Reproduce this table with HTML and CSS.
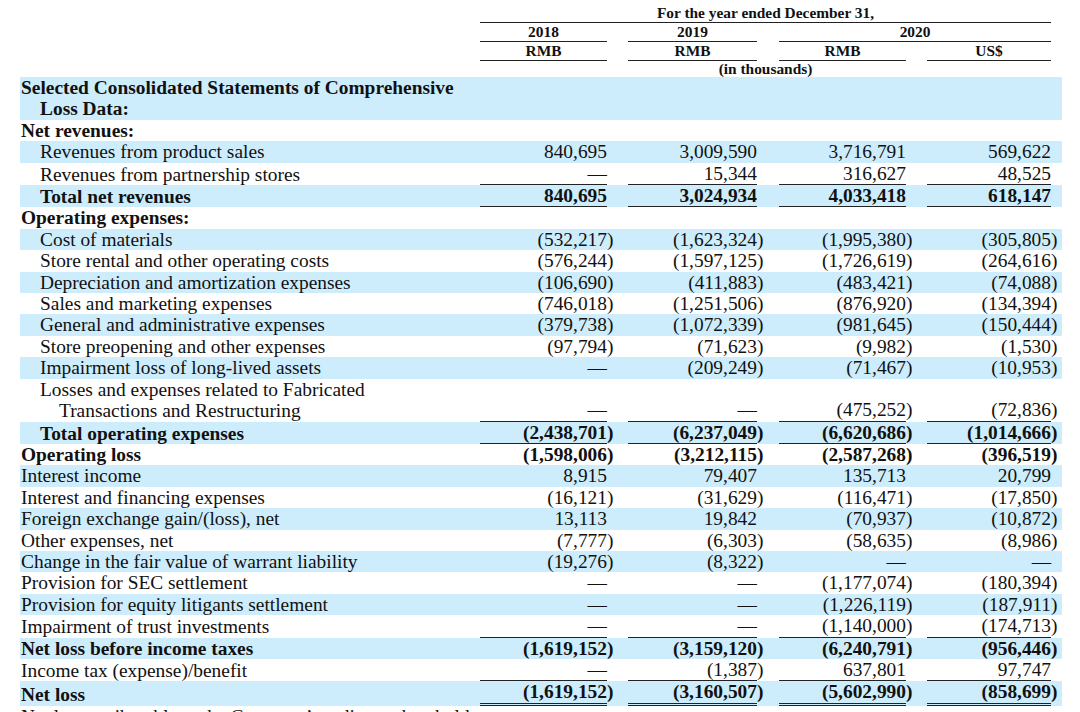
FILE: index.html
```html
<!DOCTYPE html>
<html lang="en">
<head>
<meta charset="utf-8">
<title>Selected Consolidated Statements of Comprehensive Loss Data</title>
<link rel="stylesheet" href="styles.css">
</head>
<body>
<table class="fin">
  <colgroup>
    <col class="c-lbl"><col class="c-v1"><col class="c-g1"><col class="c-v2"><col class="c-g2"><col class="c-v3"><col class="c-g3"><col class="c-v4"><col class="c-tr">
  </colgroup>
  <thead>
    <tr class="hd">
      <td></td><td colspan="7" class="rule">For the year ended December 31,</td><td></td>
    </tr>
    <tr class="hd">
      <td></td><td class="rule">2018</td><td></td><td class="rule">2019</td><td></td><td colspan="3" class="rule">2020</td><td></td>
    </tr>
    <tr class="hd">
      <td></td><td class="rule">RMB</td><td></td><td class="rule">RMB</td><td></td><td class="rule">RMB</td><td></td><td class="rule">US$</td><td></td>
    </tr>
    <tr class="hd hd-last">
      <td></td><td colspan="7">(in thousands)</td><td></td>
    </tr>
  </thead>
  <tbody>
    <tr class="r b bold"><td class="lbl l0">Selected Consolidated Statements of Comprehensive<span class="cont">Loss Data:</span></td><td class="v"></td><td></td><td class="v"></td><td></td><td class="v"></td><td></td><td class="v"></td><td></td></tr>
    <tr class="r bold"><td class="lbl l0">Net revenues:</td><td class="v"></td><td></td><td class="v"></td><td></td><td class="v"></td><td></td><td class="v"></td><td></td></tr>
    <tr class="r b"><td class="lbl l1">Revenues from product sales</td><td class="v">840,695</td><td></td><td class="v">3,009,590</td><td></td><td class="v">3,716,791</td><td></td><td class="v">569,622</td><td></td></tr>
    <tr class="r u"><td class="lbl l1">Revenues from partnership stores</td><td class="v">—</td><td></td><td class="v">15,344</td><td></td><td class="v">316,627</td><td></td><td class="v">48,525</td><td></td></tr>
    <tr class="r b bold u"><td class="lbl l1">Total net revenues</td><td class="v">840,695</td><td></td><td class="v">3,024,934</td><td></td><td class="v">4,033,418</td><td></td><td class="v">618,147</td><td></td></tr>
    <tr class="r bold"><td class="lbl l0">Operating expenses:</td><td class="v"></td><td></td><td class="v"></td><td></td><td class="v"></td><td></td><td class="v"></td><td></td></tr>
    <tr class="r b"><td class="lbl l1">Cost of materials</td><td class="v">(532,217<span class="p">)</span></td><td></td><td class="v">(1,623,324<span class="p">)</span></td><td></td><td class="v">(1,995,380<span class="p">)</span></td><td></td><td class="v">(305,805<span class="p">)</span></td><td></td></tr>
    <tr class="r"><td class="lbl l1">Store rental and other operating costs</td><td class="v">(576,244<span class="p">)</span></td><td></td><td class="v">(1,597,125<span class="p">)</span></td><td></td><td class="v">(1,726,619<span class="p">)</span></td><td></td><td class="v">(264,616<span class="p">)</span></td><td></td></tr>
    <tr class="r b"><td class="lbl l1">Depreciation and amortization expenses</td><td class="v">(106,690<span class="p">)</span></td><td></td><td class="v">(411,883<span class="p">)</span></td><td></td><td class="v">(483,421<span class="p">)</span></td><td></td><td class="v">(74,088<span class="p">)</span></td><td></td></tr>
    <tr class="r"><td class="lbl l1">Sales and marketing expenses</td><td class="v">(746,018<span class="p">)</span></td><td></td><td class="v">(1,251,506<span class="p">)</span></td><td></td><td class="v">(876,920<span class="p">)</span></td><td></td><td class="v">(134,394<span class="p">)</span></td><td></td></tr>
    <tr class="r b"><td class="lbl l1">General and administrative expenses</td><td class="v">(379,738<span class="p">)</span></td><td></td><td class="v">(1,072,339<span class="p">)</span></td><td></td><td class="v">(981,645<span class="p">)</span></td><td></td><td class="v">(150,444<span class="p">)</span></td><td></td></tr>
    <tr class="r"><td class="lbl l1">Store preopening and other expenses</td><td class="v">(97,794<span class="p">)</span></td><td></td><td class="v">(71,623<span class="p">)</span></td><td></td><td class="v">(9,982<span class="p">)</span></td><td></td><td class="v">(1,530<span class="p">)</span></td><td></td></tr>
    <tr class="r b"><td class="lbl l1">Impairment loss of long-lived assets</td><td class="v">—</td><td></td><td class="v">(209,249<span class="p">)</span></td><td></td><td class="v">(71,467<span class="p">)</span></td><td></td><td class="v">(10,953<span class="p">)</span></td><td></td></tr>
    <tr class="r u"><td class="lbl l1">Losses and expenses related to Fabricated<span class="cont">Transactions and Restructuring</span></td><td class="v">—</td><td></td><td class="v">—</td><td></td><td class="v">(475,252<span class="p">)</span></td><td></td><td class="v">(72,836<span class="p">)</span></td><td></td></tr>
    <tr class="r b bold u"><td class="lbl l1">Total operating expenses</td><td class="v">(2,438,701<span class="p">)</span></td><td></td><td class="v">(6,237,049<span class="p">)</span></td><td></td><td class="v">(6,620,686<span class="p">)</span></td><td></td><td class="v">(1,014,666<span class="p">)</span></td><td></td></tr>
    <tr class="r bold"><td class="lbl l0">Operating loss</td><td class="v">(1,598,006<span class="p">)</span></td><td></td><td class="v">(3,212,115<span class="p">)</span></td><td></td><td class="v">(2,587,268<span class="p">)</span></td><td></td><td class="v">(396,519<span class="p">)</span></td><td></td></tr>
    <tr class="r b"><td class="lbl l0">Interest income</td><td class="v">8,915</td><td></td><td class="v">79,407</td><td></td><td class="v">135,713</td><td></td><td class="v">20,799</td><td></td></tr>
    <tr class="r"><td class="lbl l0">Interest and financing expenses</td><td class="v">(16,121<span class="p">)</span></td><td></td><td class="v">(31,629<span class="p">)</span></td><td></td><td class="v">(116,471<span class="p">)</span></td><td></td><td class="v">(17,850<span class="p">)</span></td><td></td></tr>
    <tr class="r b"><td class="lbl l0">Foreign exchange gain/(loss), net</td><td class="v">13,113</td><td></td><td class="v">19,842</td><td></td><td class="v">(70,937<span class="p">)</span></td><td></td><td class="v">(10,872<span class="p">)</span></td><td></td></tr>
    <tr class="r"><td class="lbl l0">Other expenses, net</td><td class="v">(7,777<span class="p">)</span></td><td></td><td class="v">(6,303<span class="p">)</span></td><td></td><td class="v">(58,635<span class="p">)</span></td><td></td><td class="v">(8,986<span class="p">)</span></td><td></td></tr>
    <tr class="r b"><td class="lbl l0">Change in the fair value of warrant liability</td><td class="v">(19,276<span class="p">)</span></td><td></td><td class="v">(8,322<span class="p">)</span></td><td></td><td class="v">—</td><td></td><td class="v">—</td><td></td></tr>
    <tr class="r"><td class="lbl l0">Provision for SEC settlement</td><td class="v">—</td><td></td><td class="v">—</td><td></td><td class="v">(1,177,074<span class="p">)</span></td><td></td><td class="v">(180,394<span class="p">)</span></td><td></td></tr>
    <tr class="r b"><td class="lbl l0">Provision for equity litigants settlement</td><td class="v">—</td><td></td><td class="v">—</td><td></td><td class="v">(1,226,119<span class="p">)</span></td><td></td><td class="v">(187,911<span class="p">)</span></td><td></td></tr>
    <tr class="r u"><td class="lbl l0">Impairment of trust investments</td><td class="v">—</td><td></td><td class="v">—</td><td></td><td class="v">(1,140,000<span class="p">)</span></td><td></td><td class="v">(174,713<span class="p">)</span></td><td></td></tr>
    <tr class="r b bold"><td class="lbl l0">Net loss before income taxes</td><td class="v">(1,619,152<span class="p">)</span></td><td></td><td class="v">(3,159,120<span class="p">)</span></td><td></td><td class="v">(6,240,791<span class="p">)</span></td><td></td><td class="v">(956,446<span class="p">)</span></td><td></td></tr>
    <tr class="r u"><td class="lbl l0">Income tax (expense)/benefit</td><td class="v">—</td><td></td><td class="v">(1,387<span class="p">)</span></td><td></td><td class="v">637,801</td><td></td><td class="v">97,747</td><td></td></tr>
    <tr class="r b bold dbl"><td class="lbl l0">Net loss</td><td class="v">(1,619,152<span class="p">)</span></td><td></td><td class="v">(3,160,507<span class="p">)</span></td><td></td><td class="v">(5,602,990<span class="p">)</span></td><td></td><td class="v">(858,699<span class="p">)</span></td><td></td></tr>
    <tr class="r"><td class="lbl l0">Net loss attributable to the Company’s ordinary shareholders</td><td class="v"></td><td></td><td class="v"></td><td></td><td class="v"></td><td></td><td class="v"></td><td></td></tr>
  </tbody>
</table>
</body>
</html>
```

FILE: styles.css
```css
html, body {
  margin: 0;
  padding: 0;
  background: #ffffff;
}

body {
  font-family: "Liberation Serif", "Times New Roman", serif;
  color: #111111;
  overflow: hidden;
}

.fin {
  border-collapse: separate;
  border-spacing: 0;
  table-layout: fixed;
  width: 1042px;
  margin: 4px 0 0 20px;
}

.c-lbl { width: 460px; }
.c-v1 { width: 127px; }
.c-g1 { width: 21px; }
.c-v2 { width: 129px; }
.c-g2 { width: 22px; }
.c-v3 { width: 127px; }
.c-g3 { width: 21px; }
.c-v4 { width: 124px; }
.c-tr { width: 11px; }

.hd td {
  font-size: 15.4px;
  font-weight: bold;
  line-height: 18px;
  text-align: center;
  padding: 0;
  white-space: nowrap;
}

.hd-last td {
  line-height: 16px;
}

.hd td.rule {
  border-bottom: 1px solid #222222;
}

.r td {
  font-size: 19.4px;
  line-height: 21.4px;
  padding: 0;
  vertical-align: bottom;
  white-space: nowrap;
}

.r.b td {
  background: #cdedfd;
}

.r.bold td {
  font-weight: bold;
}

.lbl.l0 { padding-left: 1px; }
.lbl.l1 { padding-left: 20px; }

.cont {
  display: block;
  padding-left: 19px;
}

.v {
  text-align: right;
}

.p {
  margin-right: -0.333em;
}

.r.u td.v {
  border-bottom: 1px solid #222222;
}

.r.dbl td.v {
  border-bottom: 3px double #222222;
}
```
